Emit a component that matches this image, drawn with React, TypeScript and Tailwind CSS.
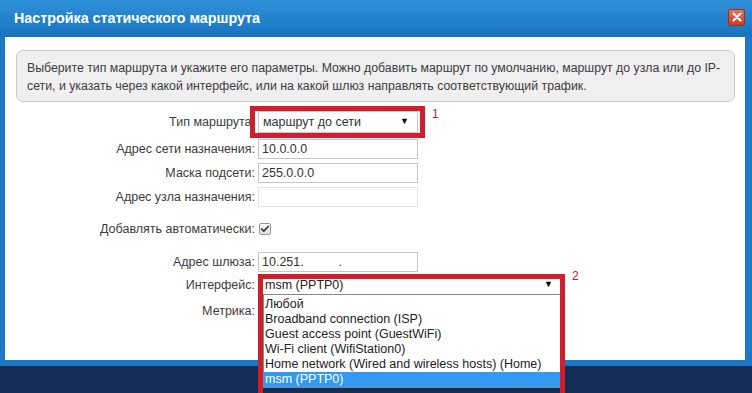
import { Check } from 'lucide-react';

const rows = [
  { label: 'Адрес сети назначения:', value: '10.0.0.0', mt: 'mt-[6px]', light: false },
  { label: 'Маска подсети:', value: '255.0.0.0', mt: 'mt-[4px]', light: false },
  { label: 'Адрес узла назначения:', value: '', mt: 'mt-[4px]', light: true },
];

const interfaces = [
  'Любой',
  'Broadband connection (ISP)',
  'Guest access point (GuestWiFi)',
  'Wi-Fi client (WifiStation0)',
  'Home network (Wired and wireless hosts) (Home)',
  'msm (PPTP0)',
];

const Label: React.FC<{ text: string }> = ({ text }) => (
  <div className="w-[250px] shrink-0 text-right text-[12.5px] text-[#3c3c3c] whitespace-nowrap">{text}</div>
);

export default function App() {
  return (
    <div className="relative w-[752px] h-[393px] overflow-hidden bg-[#132e56] font-['Liberation_Sans',Arial,sans-serif]">
      <div className="flex flex-col h-[366px] bg-[#1a78c4]">
        <div className="h-[37px] shrink-0 flex items-center justify-between pl-[14px] pr-[7px] bg-gradient-to-b from-[#2f91da] to-[#1873bf]">
          <span className="text-white font-bold text-[14.3px]">Настройка статического маршрута</span>
          <div className="w-[17px] h-[17px] mb-[3px] flex items-center justify-center border border-[#9a3222] rounded-[2px] bg-gradient-to-b from-[#e8735c] to-[#c2412c]">
            <svg viewBox="0 0 10 10" className="w-[10px] h-[10px]">
              <path d="M1.5 1.5 L8.5 8.5 M8.5 1.5 L1.5 8.5" stroke="#fff" strokeWidth="2" strokeLinecap="round" />
            </svg>
          </div>
        </div>

        <div className="ml-[5px] mr-[7px] h-[323px] bg-white">
          <div className="mt-[13px] ml-[11px] mr-[10px] h-[52px] rounded-[7px] border border-[#c9c9c9] bg-[#efefef] pl-[10px] pt-[8px] text-[12.3px] leading-[18px] text-[#3c3c3c] whitespace-nowrap">
            Выберите тип маршрута и укажите его параметры. Можно добавить маршрут по умолчанию, маршрут до узла или до IP-
            <br />
            сети, и указать через какой интерфейс, или на какой шлюз направлять соответствующий трафик.
          </div>

          <div className="mt-[9px] flex items-center h-[22px]">
            <Label text="Тип маршрута:" />
            <div className="ml-[3px] w-[160px] h-[22px] border border-[#c6c6c6] flex items-center justify-between pl-[4px] pr-[8px] text-[12.5px] text-[#333]">
              <span>маршрут до сети</span>
              <span className="text-[9px] text-black">▼</span>
            </div>
          </div>

          {rows.map((r) => (
            <div key={r.label} className={`${r.mt} flex items-center h-[20px]`}>
              <Label text={r.label} />
              <div className={`ml-[3px] w-[160px] h-[20px] border ${r.light ? 'border-[#e4e4e4]' : 'border-[#c6c6c6]'} flex items-center px-[3px] text-[12.5px] text-[#333]`}>
                {r.value}
              </div>
            </div>
          ))}

          <div className="mt-[12px] flex items-center h-[20px]">
            <Label text="Добавлять автоматически:" />
            <div className="ml-[4px] w-[12px] h-[12px] border border-[#9a9a9a] rounded-[2px] bg-gradient-to-b from-[#fafafa] to-[#dedede] flex items-center justify-center">
              <Check className="w-[10px] h-[10px] text-[#333]" strokeWidth={4} />
            </div>
          </div>

          <div className="mt-[13px] flex items-center h-[20px]">
            <Label text="Адрес шлюза:" />
            <div className="ml-[3px] w-[160px] h-[20px] border border-[#c6c6c6] flex items-center px-[3px] text-[12.5px] text-[#333] whitespace-pre">
              {'10.251.          .'}
            </div>
          </div>

          <div className="mt-[4px] flex items-center h-[18px]">
            <Label text="Интерфейс:" />
            <div className="relative ml-[8px] w-[298px] h-[17px] bg-white flex items-center justify-between pl-[2px] pr-[8px] text-[12.5px] text-[#222]">
              <span>msm (PPTP0)</span>
              <span className="text-[9px] text-black">▼</span>
              <div className="absolute left-0 top-full w-full border border-[#8a8a8a] bg-white pt-[2px] z-10">
                {interfaces.map((it, i) => (
                  <div
                    key={it}
                    className={`h-[15px] leading-[15px] pl-[1px] text-[12.5px] whitespace-nowrap ${i === interfaces.length - 1 ? 'bg-[#3399f3] text-white' : 'text-[#222]'}`}
                  >
                    {it}
                  </div>
                ))}
              </div>
            </div>
          </div>

          <div className="mt-[7px] flex items-center h-[20px]">
            <Label text="Метрика:" />
          </div>
        </div>
      </div>

      <div className="absolute left-[250px] top-[106px] w-[175px] h-[32px] border-[5px] border-[#cf1f2d] z-20" />
      <span className="absolute left-[432px] top-[105px] text-[12px] text-[#b2242e] z-20">1</span>
      <div className="absolute left-[258px] top-[274px] w-[307px] h-[130px] border-[5px] border-[#cf1f2d] z-20" />
      <span className="absolute left-[572px] top-[267px] text-[12px] text-[#b2242e] z-20">2</span>
    </div>
  );
}
